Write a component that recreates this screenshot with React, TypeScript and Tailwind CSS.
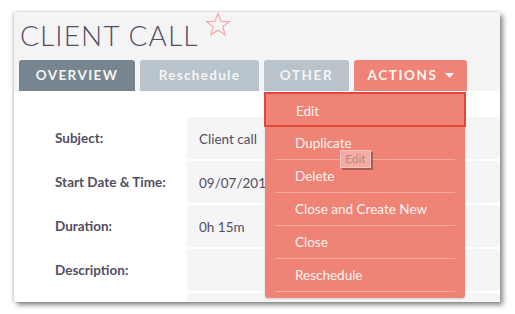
import React from "react";

const rows = [
  { label: "Subject:", value: "Client call" },
  { label: "Start Date & Time:", value: "09/07/2016 10:00" },
  { label: "Duration:", value: "0h 15m" },
  { label: "Description:", value: "" },
];

const actions = ["Edit", "Duplicate", "Delete", "Close and Create New", "Close", "Reschedule"];

export default function App() {
  return (
    <div className="w-[515px] h-[314px] bg-white overflow-hidden" style={{ fontFamily: "Lato, 'Open Sans', sans-serif" }}>
      <div className="relative ml-[14px] mt-[12px] w-[486px] h-[290px] bg-white overflow-hidden shadow-[3px_3px_5px_rgba(0,0,0,0.45),-1px_0_3px_rgba(0,0,0,0.2)]">
        {/* header */}
        <div className="bg-[#f4f4f4] pl-[5px] h-[79px] flex flex-col">
          <div className="flex items-start h-[48px]">
            <h1 className="ml-[1px] mt-[6px] text-[28px] leading-[34px] font-light tracking-[1.1px] text-[#534d64]">CLIENT CALL</h1>
            <svg width="26" height="24" viewBox="0 0 26 24" className="ml-[7px]">
              <path d="M13 1.5 L16 9.3 L24.4 9.6 L17.8 14.8 L20.1 22.8 L13 18.2 L5.9 22.8 L8.2 14.8 L1.6 9.6 L10 9.3 Z" fill="none" stroke="#f4a2a6" strokeWidth="1.1" strokeLinejoin="miter" />
            </svg>
          </div>
          <div className="flex gap-[5px] h-[31px]">
            <div className="w-[116px] rounded-t-[3px] bg-[#778591] text-[#f5f5f5] text-[13.5px] font-bold tracking-[1.4px] flex items-center justify-center">OVERVIEW</div>
            <div className="w-[119px] rounded-t-[3px] bg-[#b8c3cc] text-[#f5f5f5] text-[13.5px] font-bold tracking-[1.3px] flex items-center justify-center">Reschedule</div>
            <div className="w-[85px] rounded-t-[3px] bg-[#b8c3cc] text-[#f5f5f5] text-[13.5px] font-bold tracking-[1.6px] flex items-center justify-center">OTHER</div>
            <div className="w-[113px] rounded-t-[3px] bg-[#f08377] text-[#fff5f3] text-[13.5px] font-bold tracking-[1.6px] flex items-center justify-center gap-[7px]">
              <span>ACTIONS</span>
              <svg width="9" height="5" viewBox="0 0 9 5"><path d="M0 0 H9 L4.5 5 Z" fill="#fff5f3" /></svg>
            </div>
          </div>
        </div>

        {/* detail rows */}
        <div className="pt-[26px] flex flex-col gap-[2px]">
          {rows.map((r) => (
            <div key={r.label} className="flex h-[42px]">
              <div className="w-[173px] pl-[41px] pt-[11px] text-[13.5px] font-bold text-[#534d64]">{r.label}</div>
              <div className="flex-1 rounded-[4px] bg-[#f5f5f5] pl-[12px] pt-[12px] text-[13.5px] text-[#534d64] whitespace-nowrap overflow-hidden">{r.value}</div>
            </div>
          ))}
          <div className="flex h-[42px]">
            <div className="w-[173px]" />
            <div className="flex-1 rounded-[4px] bg-[#f5f5f5]" />
          </div>
        </div>

        {/* actions dropdown */}
        <div className="absolute left-[251px] top-[80px] w-[200px] h-[206px] bg-[#ee8376] rounded-b-[3px] shadow-[0_1px_2px_rgba(0,0,0,0.15)]">
          {actions.map((a, i) => (
            <div key={a} className={i === 0 ? "h-[35px] border-2 border-[#e2463f] -mx-[1px] pl-[30px] pt-[3px] flex items-center text-[13.5px] text-[#fff3f1]" : "h-[33px] mx-[10px] border-b border-[#f4aaa1] pl-[20px] pt-[1px] flex items-center text-[13.5px] text-[#fff3f1]"}>
              {a}
            </div>
          ))}
          <div className="absolute left-[75px] top-[58px] px-[4px] h-[18px] bg-[#f3aba3] border border-[#f7c5bf] text-[12px] leading-[16px] text-[#b98a86] shadow-[2px_2px_0_rgba(120,60,55,0.55)]">Edit</div>
        </div>
      </div>
    </div>
  );
}
